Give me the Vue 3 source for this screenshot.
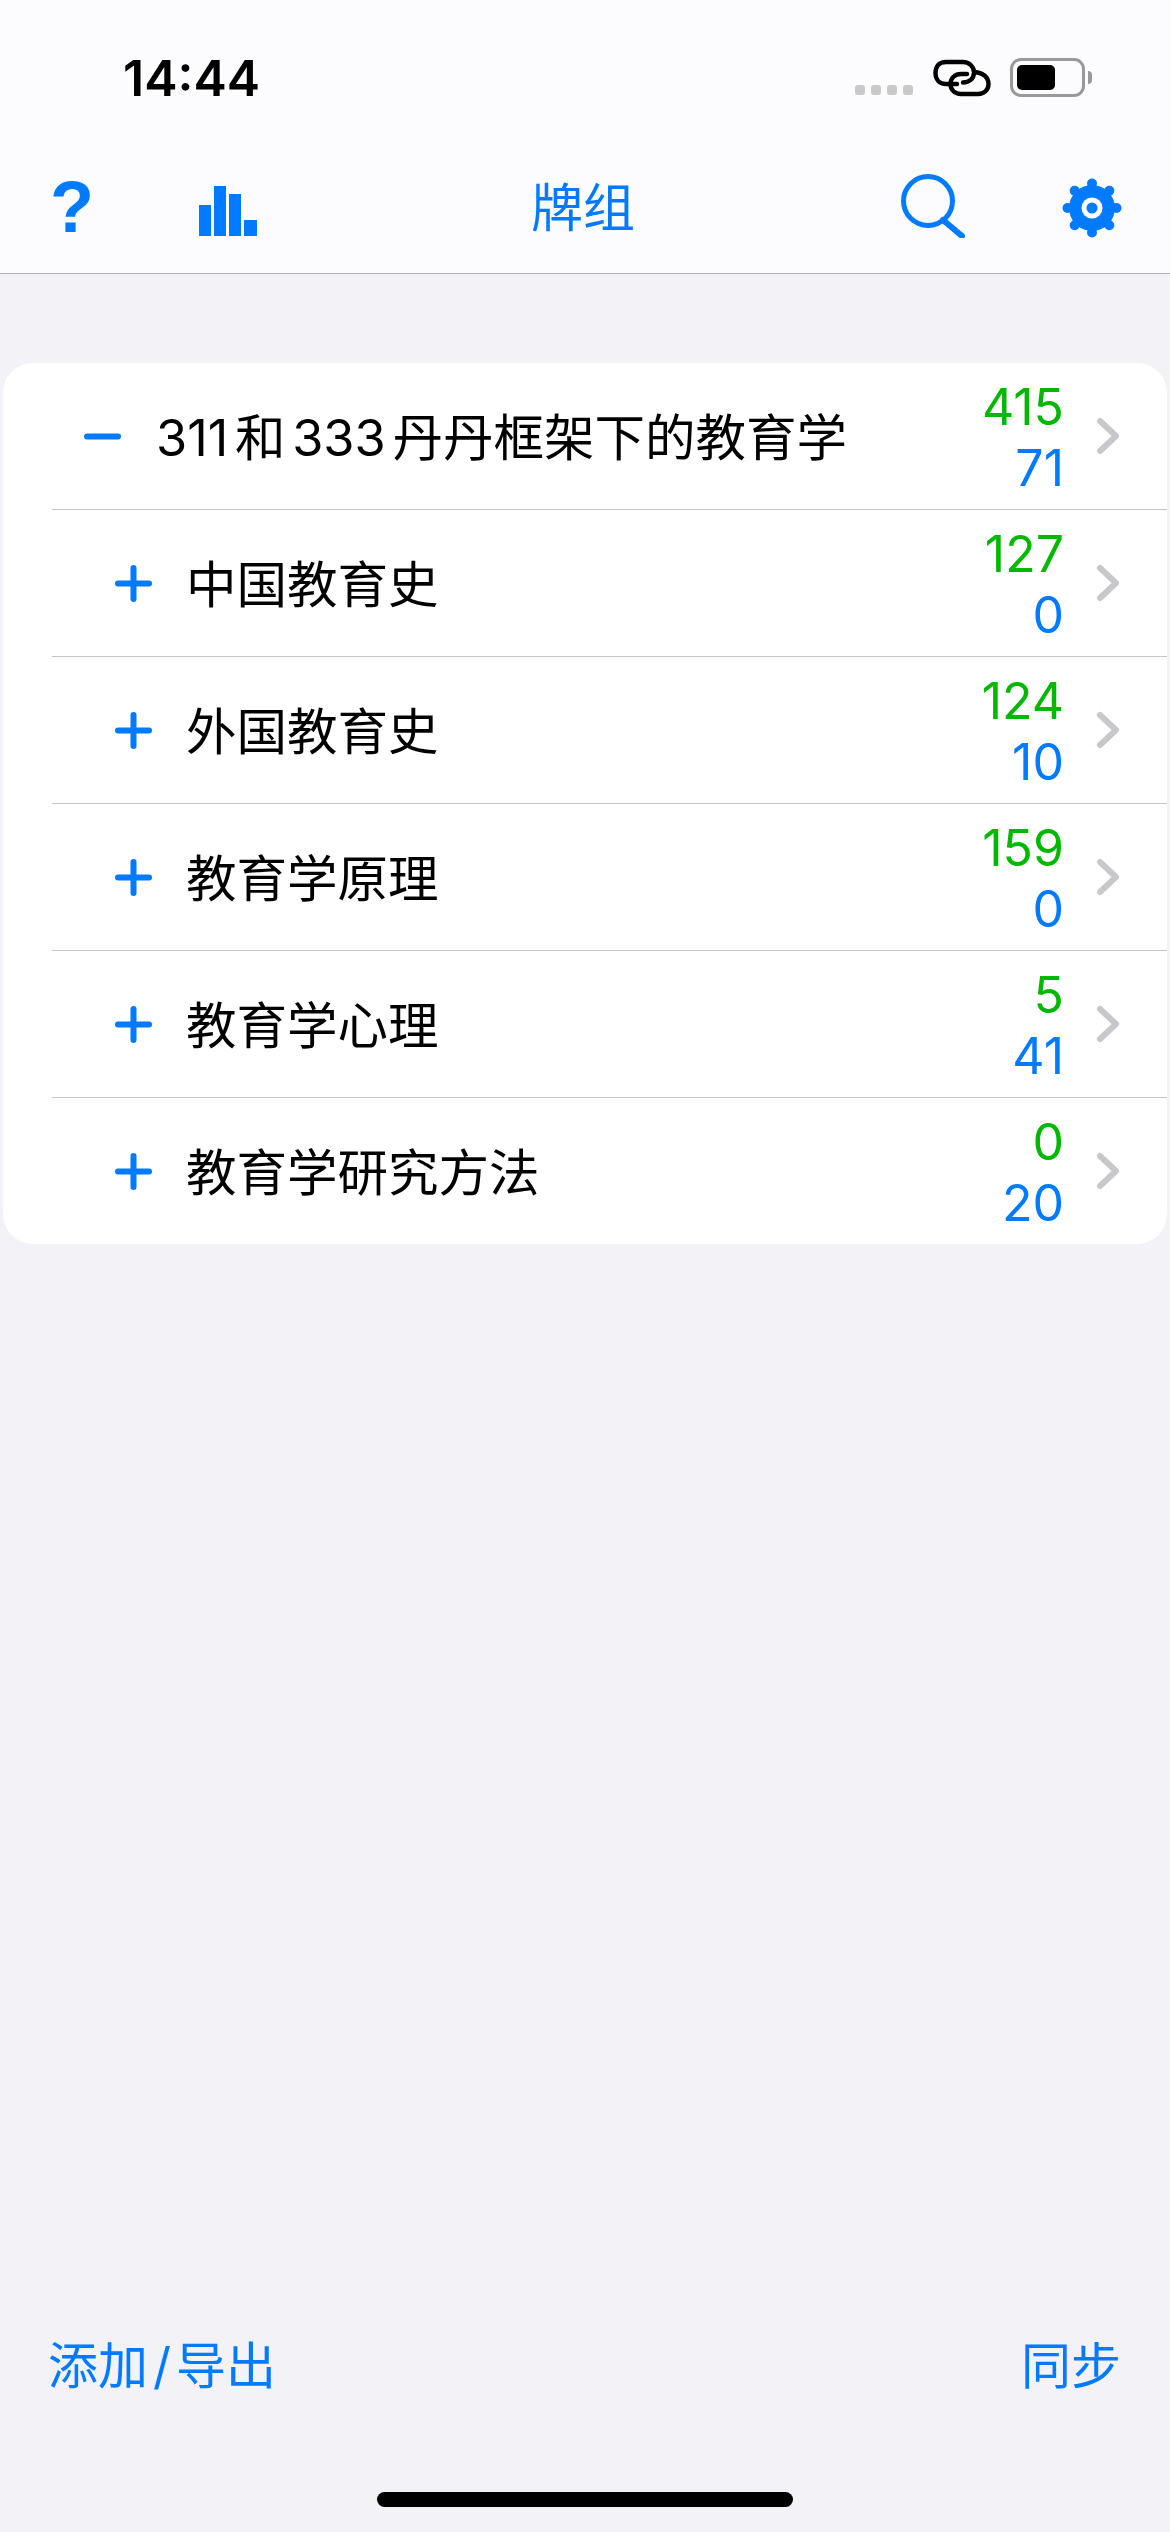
<template>
  <div class="screen">
    <header class="top">
      <div class="status">
        <span class="time">14:44</span>
        <div class="status-right">
          <div class="signal"><i v-for="n in 4" :key="n"></i></div>
          <svg class="link" viewBox="0 0 58 38" fill="none" stroke="#000" stroke-width="4.4" stroke-linecap="round">
            <path d="M24 25H13C6.500 25 2.500 20.500 2.500 14C2.500 7 6.500 3 13 3H30C36 3 41 7.500 41 13.500C41 20 36 23.500 30 23.500" />
            <path d="M41.500 13C49.500 13.500 55.500 18 55.500 25C55.500 31 51 35 45 35H28C22 35 17.500 31 17.500 25C17.500 19 22 15 28 15H34" />
          </svg>
          <div class="battery"><div class="battery-fill"></div></div>
          <div class="battery-tip"></div>
        </div>
      </div>

      <nav class="nav">
        <span class="help">?</span>
        <svg class="stats" viewBox="0 0 58 50" fill="#007aff">
          <rect x="0" y="19" width="12" height="31" />
          <rect x="15" y="0" width="12" height="50" />
          <rect x="30" y="8" width="12" height="42" />
          <rect x="45" y="34" width="13" height="16" />
        </svg>
        <h1 class="title">牌组</h1>
        <svg class="search" viewBox="0 0 64 64" fill="none" stroke="#007aff" stroke-width="5" stroke-linecap="round">
          <circle cx="27" cy="27" r="24.500" />
          <path d="M42 46L61 62" stroke-width="6" />
        </svg>
        <svg class="gear" viewBox="0 0 60 60">
          <g fill="#007aff">
            <circle cx="30" cy="30" r="23" />
            <circle v-for="t in teeth" :key="t.x" :cx="t.x" :cy="t.y" r="5" />
          </g>
          <circle cx="30" cy="30" r="10.500" fill="#fcfcfe" />
          <circle cx="30" cy="30" r="5.500" fill="#007aff" />
        </svg>
      </nav>
    </header>

    <main class="content">
      <ul class="deck-list">
        <li v-for="deck in decks" :key="deck.name" class="deck" :class="{ child: !deck.root, root: deck.root }">
          <svg class="toggle" viewBox="0 0 37 37" fill="none" stroke="#007aff" stroke-width="6" stroke-linecap="round">
            <path d="M3 18.500H34" />
            <path v-if="!deck.root" d="M18.500 3V34" />
          </svg>
          <span class="name">{{ deck.name }}</span>
          <div class="counts">
            <span class="due">{{ deck.due }}</span>
            <span class="fresh">{{ deck.fresh }}</span>
          </div>
          <svg class="chevron" viewBox="0 0 24 38" fill="none" stroke="#c7c7cc" stroke-width="6" stroke-linecap="round" stroke-linejoin="round">
            <path d="M4 4L20 19L4 34" />
          </svg>
        </li>
      </ul>
    </main>

    <footer class="bottom">
      <span>添加<span class="slash">/</span>导出</span>
      <span>同步</span>
    </footer>
    <div class="home-bar"></div>
  </div>
</template>

<script setup>
const decks = [
  { name: '311 和 333 丹丹框架下的教育学', due: 415, fresh: 71, root: true },
  { name: '中国教育史', due: 127, fresh: 0 },
  { name: '外国教育史', due: 124, fresh: 10 },
  { name: '教育学原理', due: 159, fresh: 0 },
  { name: '教育学心理', due: 5, fresh: 41 },
  { name: '教育学研究方法', due: 0, fresh: 20 }
]

// eight bumps round the gear body
const teeth = Array.from({ length: 8 }, (_, i) => {
  const a = (i * Math.PI) / 4
  return { x: 30 + 24.5 * Math.sin(a), y: 30 - 24.5 * Math.cos(a) }
})
</script>

<style scoped>
.screen {
  display: flex;
  flex-direction: column;
  height: 2532px;
  background: #f2f2f7;
  font-family: Inter, "Noto Sans CJK SC", sans-serif;
  color: #000;
  overflow: hidden;
}

.top {
  height: 273px;
  background: #fcfcfe;
  border-bottom: 1px solid #b2b2b2;
}

.status {
  display: flex;
  align-items: center;
  justify-content: space-between;
  height: 155px;
  padding: 0 78px 0 123px;
}

.time {
  font-size: 50px;
  font-weight: 600;
}

.status-right {
  display: flex;
  align-items: center;
}

.signal {
  display: flex;
  gap: 6px;
  margin: 24px 20px 0 0;
}

.signal i {
  width: 10px;
  height: 10px;
  border-radius: 3px;
  background: #c9c9c9;
}

.link {
  width: 58px;
  height: 38px;
  margin-right: 19px;
}

.battery {
  width: 75px;
  height: 39px;
  padding: 4px;
  border: 3px solid #999;
  border-radius: 11px;
  box-sizing: border-box;
}

.battery-fill {
  width: 38px;
  height: 100%;
  background: #000;
  border-radius: 5px;
}

.battery-tip {
  width: 4px;
  height: 13px;
  margin-left: 3px;
  background: #999;
  border-radius: 0 4px 4px 0;
}

.nav {
  display: flex;
  align-items: center;
  height: 104px;
  padding: 0 48px 0 50px;
}

.help {
  width: 42px;
  font-family: "Liberation Sans", sans-serif;
  font-size: 72px;
  font-weight: 700;
  line-height: 1;
  color: #007aff;
}

.stats {
  width: 58px;
  height: 50px;
  margin-left: 107px;
  margin-top: 8px;
}

.title {
  flex: 1;
  margin: 0 0 6px;
  padding-left: 8px;
  font-size: 52px;
  font-weight: 400;
  text-align: center;
  color: #007aff;
}

.search {
  width: 64px;
  height: 64px;
  margin-bottom: 2px;
}

.gear {
  width: 60px;
  height: 60px;
  margin: 2px 0 0 97px;
}

.content {
  flex: 1;
  padding: 89px 3px 0;
}

.deck-list {
  margin: 0;
  padding: 0;
  list-style: none;
  background: #fff;
  border-radius: 30px;
  overflow: hidden;
}

.deck {
  display: flex;
  align-items: center;
  height: 146px;
  margin-left: 49px;
  padding-left: 32px;
  border-bottom: 1px solid #c6c6c8;
}

.deck:last-child {
  border-bottom: 0;
}

.deck.child {
  padding-left: 63px;
}

.toggle {
  flex: none;
  width: 37px;
  height: 37px;
}

.name {
  flex: 1;
  margin: 0 0 5px 34px;
  font-size: 50.500px;
  white-space: nowrap;
}

.deck.root .name {
  margin-left: 35px;
  word-spacing: -7.500px;
}

.counts {
  display: flex;
  flex-direction: column;
  align-items: flex-end;
  margin-top: 3px;
  font-size: 50px;
  line-height: 61px;
}

.due {
  color: #00b800;
}

.fresh {
  color: #007aff;
}

.chevron {
  width: 24px;
  height: 38px;
  margin: 0 47px 0 32px;
}

.bottom {
  display: flex;
  justify-content: space-between;
  padding: 2px 49px 0 48px;
  font-size: 50px;
  line-height: 60px;
  color: #007aff;
}

.slash {
  margin: 0 5px;
}

.home-bar {
  width: 416px;
  height: 15px;
  margin: 96px auto 25px;
  background: #000;
  border-radius: 8px;
}
</style>

<style>
html, body {
  background: #f2f2f7;
}
</style>
